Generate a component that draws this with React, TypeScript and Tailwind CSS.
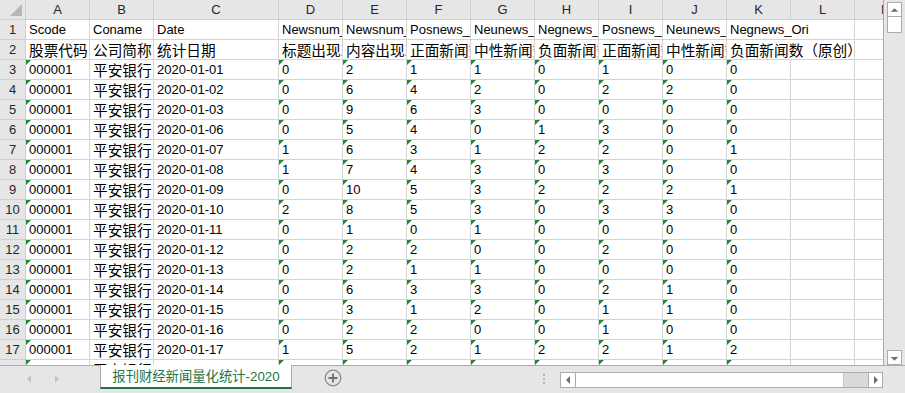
import React from 'react';

const colLetters = ['A', 'B', 'C', 'D', 'E', 'F', 'G', 'H', 'I', 'J', 'K', 'L', 'M'];

const headRow1 = [
    'Scode',
    'Coname',
    'Date',
    'Newsnum_Title',
    'Newsnum_Content',
    'Posnews_Title',
    'Neunews_Title',
    'Negnews_Title',
    'Posnews_Ori',
    'Neunews_Ori',
    'Negnews_Ori',
    '',
    '',
];

const headRow2 = [
    '股票代码',
    '公司简称',
    '统计日期',
    '标题出现次数',
    '内容出现次数',
    '正面新闻数（标题）',
    '中性新闻数（标题）',
    '负面新闻数（标题）',
    '正面新闻数（原创）',
    '中性新闻数（原创）',
    '负面新闻数（原创）',
    '',
    '',
];

// date suffix + D..K values
const data: [string, number[]][] = [
    ['01', [0, 2, 1, 1, 0, 1, 0, 0]],
    ['02', [0, 6, 4, 2, 0, 2, 2, 0]],
    ['03', [0, 9, 6, 3, 0, 0, 0, 0]],
    ['06', [0, 5, 4, 0, 1, 3, 0, 0]],
    ['07', [1, 6, 3, 1, 2, 2, 0, 1]],
    ['08', [1, 7, 4, 3, 0, 3, 0, 0]],
    ['09', [0, 10, 5, 3, 2, 2, 2, 1]],
    ['10', [2, 8, 5, 3, 0, 3, 3, 0]],
    ['11', [0, 1, 0, 1, 0, 0, 0, 0]],
    ['12', [0, 2, 2, 0, 0, 2, 0, 0]],
    ['13', [0, 2, 1, 1, 0, 0, 0, 0]],
    ['14', [0, 6, 3, 3, 0, 2, 1, 0]],
    ['15', [0, 3, 1, 2, 0, 1, 1, 0]],
    ['16', [0, 2, 2, 0, 0, 1, 0, 0]],
    ['17', [1, 5, 2, 1, 2, 2, 1, 2]],
    ['18', [0, 3, 2, 1, 0, 1, 0, 0]],
];

const isCjk = (s: string) => /[\u4e00-\u9fff\uff08\uff09]/.test(s);

const Cell = ({ text, flag, spill }: { text: string; flag?: boolean; spill?: boolean }) => (
    <div
        className={`relative whitespace-nowrap border-b border-[#d4d4d4] pl-[3px] leading-[19px] text-black ${
            isCjk(text)
                ? "font-['Noto_Sans_CJK_SC',sans-serif] text-[14.67px]"
                : "font-['Liberation_Sans',sans-serif] text-[13px]"
        } ${spill ? 'z-10 overflow-visible border-r-0' : 'overflow-hidden border-r'}`}
    >
        {flag && (
            <span className="absolute left-0 top-0 h-0 w-0 border-r-[5px] border-t-[5px] border-r-transparent border-t-[#1e8a35]" />
        )}
        {text}
    </div>
);

const RowHead = ({ n }: { n: number }) => (
    <div className="border-b border-r border-[#cfcfcf] bg-[#e6e6e6] text-center font-['Liberation_Sans',sans-serif] text-[13px] leading-[19px] text-[#262626]">
        {n}
    </div>
);

const ScrollBtn = ({ dir }: { dir: 'up' | 'down' }) => (
    <div className="flex h-[15px] w-[15px] items-center justify-center border border-[#ababab] bg-white">
        <svg width="14" height="14" viewBox="0 0 14 14">
            <polygon points={dir === 'up' ? '3,9 11,9 7,5' : '3,6 11,6 7,10'} fill="#6e6e6e" />
        </svg>
    </div>
);

export default function App() {
    return (
        <div className="flex h-[393px] w-[905px] flex-col overflow-hidden bg-[#e6e6e6] font-['Liberation_Sans','Noto_Sans_CJK_SC',sans-serif]">
            {/* Sheet + vertical scrollbar */}
            <div className="flex h-[365px]">
                <div className="h-full w-[884px] overflow-hidden border-r border-[#ababab] bg-white">
                    <div className="grid auto-rows-[20px] grid-cols-[26px_64px_64px_125px_repeat(10,64px)]">
                        {/* corner */}
                        <div className="flex items-end justify-end border-b border-r border-[#cfcfcf] bg-[#e6e6e6] pb-[3px] pr-[3px]">
                            <svg width="12" height="12" viewBox="0 0 12 12">
                                <polygon points="12,0 12,12 0,12" fill="#b6b6b6" />
                            </svg>
                        </div>
                        {colLetters.map((c) => (
                            <div
                                key={c}
                                className="border-b border-r border-[#cfcfcf] bg-[#e6e6e6] text-center text-[13px] leading-[19px] text-[#262626]"
                            >
                                {c}
                            </div>
                        ))}

                        <RowHead n={1} />
                        {headRow1.map((t, i) => (
                            <Cell key={i} text={t} spill={i === 10} />
                        ))}

                        <RowHead n={2} />
                        {headRow2.map((t, i) => (
                            <Cell key={i} text={t} spill={i === 10} />
                        ))}

                        {data.map(([day, vals], r) => (
                            <React.Fragment key={day}>
                                <RowHead n={r + 3} />
                                <Cell text="000001" flag />
                                <Cell text="平安银行" />
                                <Cell text={`2020-01-${day}`} />
                                {vals.map((v, i) => (
                                    <Cell key={i} text={String(v)} flag />
                                ))}
                                <Cell text="" />
                                <Cell text="" />
                            </React.Fragment>
                        ))}
                    </div>
                </div>
                <div className="flex w-[21px] flex-col pl-[3px] pt-[2px]">
                    <ScrollBtn dir="up" />
                    <div className="h-[16px] w-[15px] border border-t-0 border-[#ababab] bg-white" />
                    <div className="flex-1" />
                    <ScrollBtn dir="down" />
                </div>
            </div>

            {/* Sheet tabs bar */}
            <div className="flex h-[28px] border-t border-[#ababab]">
                <div className="flex w-[100px] items-center gap-[18px] pb-[2px] pl-[24px]">
                    <svg width="10" height="10" viewBox="0 0 10 10">
                        <polygon points="7,1 7,9 3,5" fill="#c4c4c4" />
                    </svg>
                    <svg width="10" height="10" viewBox="0 0 10 10">
                        <polygon points="3,1 3,9 7,5" fill="#c4c4c4" />
                    </svg>
                </div>
                <div className="-mt-px flex h-[24px] w-[192px] items-center justify-center border-x border-b-2 border-[#ababab] border-b-[#217346] bg-white pt-[1px] text-[13.33px] text-[#217346]">
                    报刊财经新闻量化统计-2020
                </div>
                <div className="flex w-[244px] items-start pl-[32px] pt-[3px]">
                    <svg width="18" height="18" viewBox="0 0 18 18">
                        <circle cx="9" cy="9" r="7.8" fill="none" stroke="#8c8c8c" strokeWidth="1.3" />
                        <path d="M9 4.5v9M4.5 9h9" stroke="#6e6e6e" strokeWidth="1.8" />
                    </svg>
                </div>
                <div className="flex w-[24px] flex-col gap-[2px] pl-[7px] pt-[8px]">
                    <span className="h-[2px] w-[2px] bg-[#b4b4b4]" />
                    <span className="h-[2px] w-[2px] bg-[#b4b4b4]" />
                    <span className="h-[2px] w-[2px] bg-[#b4b4b4]" />
                </div>
                <div className="mt-[6px] flex h-[16px] w-[323px] border border-[#ababab] bg-[#dadada]">
                    <div className="flex h-full w-[15px] items-center justify-center border-r border-[#ababab] bg-white">
                        <svg width="10" height="10" viewBox="0 0 10 10">
                            <polygon points="7,1 7,9 3,5" fill="#6e6e6e" />
                        </svg>
                    </div>
                    <div className="h-full w-[268px] border-r border-[#c8c8c8] bg-white" />
                    <div className="flex-1" />
                    <div className="flex h-full w-[14px] items-center justify-center border-l border-[#ababab] bg-white">
                        <svg width="10" height="10" viewBox="0 0 10 10">
                            <polygon points="3,1 3,9 7,5" fill="#6e6e6e" />
                        </svg>
                    </div>
                </div>
            </div>
        </div>
    );
}
